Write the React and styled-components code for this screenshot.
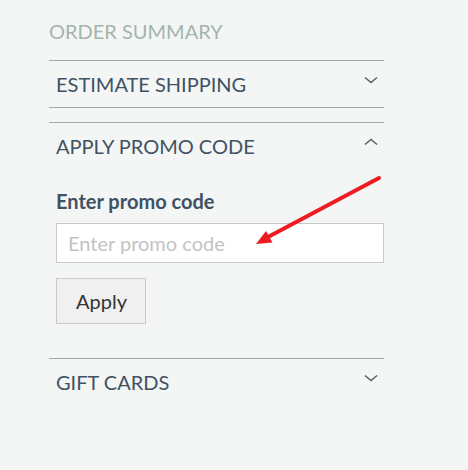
import React from "react";
import styled, { createGlobalStyle } from "styled-components";

const GlobalStyle = createGlobalStyle`
  html, body {
    margin: 0;
    padding: 0;
    background: #f4f5f5;
  }
  body {
    font-family: Lato, "Open Sans", sans-serif;
  }
`;

const Page = styled.div`
  position: relative;
  width: 468px;
  height: 470px;
  padding: 20px 0 0 49px;
  box-sizing: border-box;
`;

const Summary = styled.div`
  width: 335px;
`;

const Heading = styled.h2`
  margin: 0 0 18px;
  font-size: 20px;
  line-height: 22px;
  font-weight: 400;
  color: #a3b5ac;
`;

const Section = styled.div`
  border-top: 1px solid #a5a7a8;
  border-bottom: ${(props) => (props.$divided ? "1px solid #a5a7a8" : "none")};
  margin-bottom: ${(props) => (props.$divided ? "14px" : "0")};
`;

const Header = styled.div`
  display: flex;
  align-items: flex-start;
  justify-content: space-between;
  padding: 11px 6px 11px 7px;
`;

const Title = styled.span`
  font-size: 20px;
  line-height: 24px;
  color: #3f5263;
`;

const Chevron = styled.svg`
  width: 14px;
  height: 8px;
  margin-top: 4px;
  fill: none;
  stroke: #56606a;
  stroke-width: 1.5;
`;

const Body = styled.div`
  padding: 21px 0 34px 7px;
`;

const Label = styled.label`
  display: block;
  font-size: 20px;
  line-height: 22px;
  font-weight: 700;
  color: #3f5263;
  margin-bottom: 11px;
`;

const Input = styled.input`
  display: block;
  width: 100%;
  height: 40px;
  box-sizing: border-box;
  padding: 0 11px;
  border: 1px solid #c9c9c9;
  background: #fff;
  font-family: inherit;
  font-size: 20px;
  color: #333;
  outline: none;

  &::placeholder {
    color: #c3c3c3;
  }
`;

const Button = styled.button`
  display: block;
  margin-top: 15px;
  height: 46px;
  padding: 0 18px 0 19px;
  box-sizing: border-box;
  border: 1px solid #c9c9c9;
  background: #f0f0f0;
  font-family: inherit;
  font-size: 20px;
  color: #333;
  cursor: pointer;
`;

const Arrow = styled.svg`
  position: absolute;
  left: 250px;
  top: 170px;
  width: 136px;
  height: 80px;
  pointer-events: none;
`;

const ChevronIcon = ({ up }) => (
  <Chevron viewBox="0 0 14 8">
    <path d={up ? "M1 6.5 L7 1.5 L13 6.5" : "M1 1.5 L7 6.5 L13 1.5"} />
  </Chevron>
);

const App = () => {
  return (
    <Page>
      <GlobalStyle />
      <Summary>
        <Heading>ORDER SUMMARY</Heading>
        <Section $divided>
          <Header>
            <Title>ESTIMATE SHIPPING</Title>
            <ChevronIcon />
          </Header>
        </Section>
        <Section>
          <Header>
            <Title>APPLY PROMO CODE</Title>
            <ChevronIcon up />
          </Header>
          <Body>
            <Label htmlFor="promo">Enter promo code</Label>
            <Input id="promo" placeholder="Enter promo code" />
            <Button>Apply</Button>
          </Body>
        </Section>
        <Section>
          <Header>
            <Title>GIFT CARDS</Title>
            <ChevronIcon />
          </Header>
        </Section>
      </Summary>
      <Arrow viewBox="0 0 136 80">
        <line x1="129" y1="8" x2="18" y2="67" stroke="#ee1c22" strokeWidth="4" strokeLinecap="round" />
        <polygon points="6,74 22.5,72.5 16,61" fill="#ee1c22" />
      </Arrow>
    </Page>
  );
};

export default App;
